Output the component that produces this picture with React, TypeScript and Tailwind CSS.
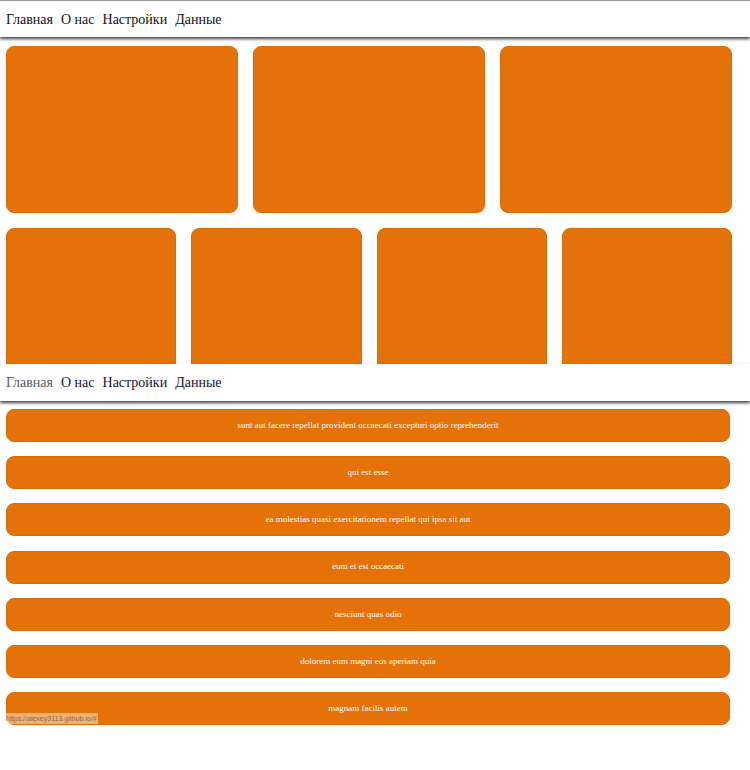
import React from "react";

const posts = [
  "sunt aut facere repellat provident occaecati excepturi optio reprehenderit",
  "qui est esse",
  "ea molestias quasi exercitationem repellat qui ipsa sit aut",
  "eum et est occaecati",
  "nesciunt quas odio",
  "dolorem eum magni eos aperiam quia",
  "magnam facilis autem",
];

function Nav({ active, bordered }: { active?: boolean; bordered?: boolean }) {
  return (
    <nav
      className={`relative z-10 h-[37px] bg-white flex items-center gap-[8px] px-[6px] text-[14px] shadow-[0_2px_3px_rgba(0,0,0,0.75)] ${
        bordered ? "border-t border-[#9a9a9a]" : ""
      }`}
    >
      <a href="#" className={active ? "text-[#5c5c5c]" : "text-[#111]"}>
        Главная
      </a>
      <a href="#" className={active ? "text-[#14142b]" : "text-[#111]"}>
        О нас
      </a>
      <a href="#" className={active ? "text-[#14142b]" : "text-[#111]"}>
        Настройки
      </a>
      <a href="#" className={active ? "text-[#14142b]" : "text-[#111]"}>
        Данные
      </a>
    </nav>
  );
}

function Card() {
  return <div className="rounded-lg bg-[#e47209] border border-[#dc6c0a]" />;
}

export default function App() {
  return (
    <div className="relative w-[750px] h-[770px] bg-white overflow-hidden font-['Liberation_Serif',serif]">
      {/* first screen, cut off by the next section */}
      <section className="h-[364px] overflow-hidden">
        <Nav bordered />
        <div className="w-[732px] pl-[6px] pt-[9px] flex flex-col gap-[15px]">
          <div className="grid grid-cols-3 gap-[15px] h-[167px]">
            <Card />
            <Card />
            <Card />
          </div>
          <div className="grid grid-cols-4 gap-[15px] h-[167px]">
            <Card />
            <Card />
            <Card />
            <Card />
          </div>
        </div>
      </section>

      {/* posts */}
      <section>
        <Nav active />
        <ul className="pt-[8px] pl-[6px] flex flex-col gap-[14.2px]">
          {posts.map((title) => (
            <li
              key={title}
              className="w-[724px] h-[33px] rounded-lg bg-[#e47209] border border-[#dc6c0a] flex items-center justify-center text-white text-[9px]"
            >
              {title}
            </li>
          ))}
        </ul>
      </section>

      {/* browser link preview */}
      <div className="absolute left-[5px] top-[713px] px-[1px] bg-[rgba(255,255,255,0.45)] text-[#8a6a50] text-[7px] leading-[11px] font-['Liberation_Sans',sans-serif]">
        https://alexey3113.github.io/#
      </div>
    </div>
  );
}
